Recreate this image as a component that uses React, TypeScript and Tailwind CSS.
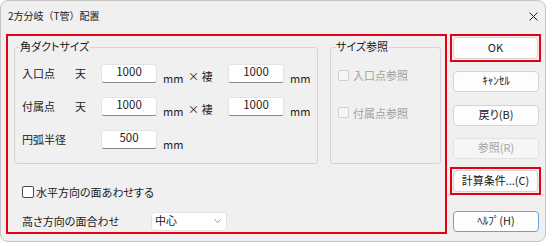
const font = {
	fontFamily: '"Noto Sans CJK JP", "Noto Sans", sans-serif',
};

function NumBox({ value, width = 'w-[56px]' }: { value: string; width?: string }) {
	return (
		<div
			className={`${width} flex h-[19px] items-center justify-center rounded-[3px] border border-[#e4e4e4] border-b-[#8a8a8a] bg-white pb-[4px] text-[11.5px] text-[#1a1a1a]`}
		>
			{value}
		</div>
	);
}

function SizeRow({ label, sub }: { label: string; sub: string }) {
	return (
		<div className="flex h-[19px] items-center">
			<span className="w-[53px]">{label}</span>
			<span className="w-[26px]">{sub}</span>
			<NumBox value="1000" />
			<span className="relative top-[5px] ml-[6px] w-[25px]">mm</span>
			<span className="relative top-[3px] w-[40px]">× 褄</span>
			<NumBox value="1000" />
			<span className="relative top-[5px] ml-[6px]">mm</span>
		</div>
	);
}

function SideButton({
	children,
	disabled,
	focused,
}: {
	children: React.ReactNode;
	disabled?: boolean;
	focused?: boolean;
}) {
	const tone = disabled
		? 'border-[#e3e3e3] bg-[#f6f6f6] text-[#a3a3a3]'
		: focused
			? 'border-[#6aa0d8] bg-[#fdfdfd] text-[#1a1a1a]'
			: 'border-[#d4d4d4] bg-[#fdfdfd] text-[#1a1a1a]';
	return (
		<div
			className={`flex h-full w-full items-center justify-center rounded-[4px] border pb-[2px] text-[11px] ${tone}`}
		>
			{children}
		</div>
	);
}

export default function App() {
	return (
		<div
			className="h-[246px] w-[552px] overflow-hidden bg-white text-[11px] text-[#1a1a1a] [font-feature-settings:'palt']"
			style={font}
		>
			<div className="h-[242px] w-[546px] rounded-[8px] border border-[#c4c4c4] bg-[#f0f0f0]">
				<div className="flex h-[33px] items-center justify-between pb-[4px] pl-[7px] pr-[6px]">
					<span className="text-[10px] [font-feature-settings:normal]">2方分岐（T管）配置</span>
					<svg width="9" height="9" viewBox="0 0 9 9" className="mr-[1px] mt-[1px]">
						<path d="M0.5 0.5 L8.5 8.5 M8.5 0.5 L0.5 8.5" stroke="#222" strokeWidth="1" />
					</svg>
				</div>

				<div className="flex gap-[3px] pl-[5px]">
					<div className="flex h-[200px] w-[441px] flex-col border-2 border-[#e60012]">
						<div className="mt-[11px] flex gap-[12px] pl-[6px]">
							<div className="relative h-[117px] w-[304px] rounded-[3px] border border-[#d4d4d4]">
								<span className="absolute -top-[10px] left-[5px] bg-[#f0f0f0] pr-[1px]">
									角ダクトサイズ
								</span>
								<div className="flex flex-col gap-[14px] pl-[7px] pt-[16px]">
									<SizeRow label="入口点" sub="天" />
									<SizeRow label="付属点" sub="天" />
									<div className="flex h-[19px] items-center">
										<span className="w-[79px]">円弧半径</span>
										<NumBox value="500" />
										<span className="relative top-[5px] ml-[6px]">mm</span>
									</div>
								</div>
							</div>

							<div className="relative h-[117px] w-[111px] rounded-[3px] border border-[#d4d4d4]">
								<span className="absolute -top-[10px] left-[5px] bg-[#f0f0f0] pr-[1px]">
									サイズ参照
								</span>
								<div className="flex flex-col gap-[21px] pl-[7px] pt-[19px] text-[#a0a0a0]">
									<div className="flex items-center gap-[4px]">
										<span className="h-[11px] w-[11px] rounded-[2px] border border-[#cfcfcf] bg-[#f6f6f6]" />
										<span>入口点参照</span>
									</div>
									<div className="flex items-center gap-[4px]">
										<span className="h-[11px] w-[11px] rounded-[2px] border border-[#cfcfcf] bg-[#f6f6f6]" />
										<span>付属点参照</span>
									</div>
								</div>
							</div>
						</div>

						<div className="mt-[22px] flex h-[12px] items-center gap-[2px] pl-[14px]">
							<span className="h-[12px] w-[12px] rounded-[2px] border border-[#4a4a4a] bg-white" />
							<span>水平方向の面あわせする</span>
						</div>

						<div className="mt-[14px] flex h-[19px] items-center pl-[14px]">
							<span className="w-[129px]">高さ方向の面合わせ</span>
							<div className="flex h-[19px] w-[76px] items-center justify-between rounded-[3px] border border-[#e4e4e4] bg-white pb-[2px] pl-[3px] pr-[5px]">
								<span>中心</span>
								<svg width="7" height="4" viewBox="0 0 7 4">
									<path d="M0.5 0.5 L3.5 3.5 L6.5 0.5" fill="none" stroke="#8a8a8a" strokeWidth="0.9" />
								</svg>
							</div>
						</div>
					</div>

					<div className="flex w-[91px] flex-col">
						<div className="h-[28px] border-2 border-[#e60012] p-[1px]">
							<SideButton>OK</SideButton>
						</div>
						<div className="ml-[3px] mt-[9px] h-[21px] w-[86px]">
							<SideButton>ｷｬﾝｾﾙ</SideButton>
						</div>
						<div className="ml-[3px] mt-[13px] h-[21px] w-[86px]">
							<SideButton>戻り(B)</SideButton>
						</div>
						<div className="ml-[3px] mt-[12px] h-[21px] w-[86px]">
							<SideButton disabled>参照(R)</SideButton>
						</div>
						<div className="mt-[8px] h-[28px] border-2 border-[#e60012] p-[1px]">
							<SideButton>計算条件...(C)</SideButton>
						</div>
						<div className="ml-[3px] mt-[16px] h-[21px] w-[86px]">
							<SideButton focused>ﾍﾙﾌﾟ(H)</SideButton>
						</div>
					</div>
				</div>
			</div>
		</div>
	);
}
